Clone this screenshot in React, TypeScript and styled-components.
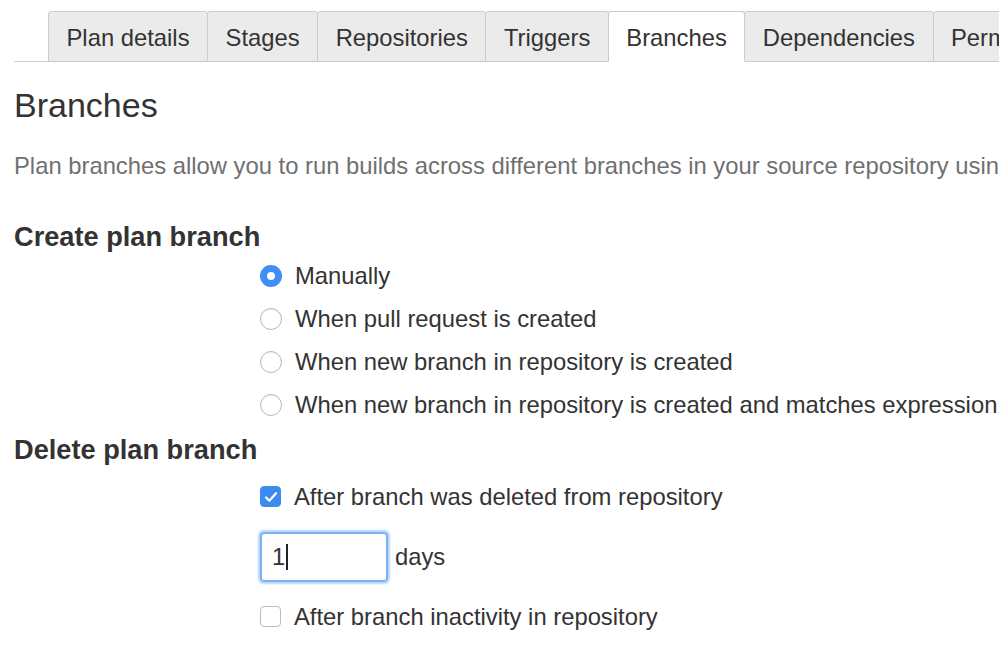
import React from 'react';
import styled, { createGlobalStyle } from 'styled-components';

const tabs = [
    'Plan details',
    'Stages',
    'Repositories',
    'Triggers',
    'Branches',
    'Dependencies',
    'Permissions',
];

const createOptions = [
    'Manually',
    'When pull request is created',
    'When new branch in repository is created',
    'When new branch in repository is created and matches expression',
];

export default function App() {
    return (
        <>
            <GlobalStyle />
            <StyledPage>
                <StyledTabBar>
                    {tabs.map((tab) => (
                        <StyledTab key={tab} active={tab === 'Branches'}>
                            {tab}
                        </StyledTab>
                    ))}
                </StyledTabBar>

                <StyledTitle>Branches</StyledTitle>
                <StyledDescription>
                    Plan branches allow you to run builds across different branches in your
                    source repository using the same plan configuration.
                </StyledDescription>

                <StyledSectionTitle>Create plan branch</StyledSectionTitle>
                <StyledOptions>
                    {createOptions.map((option, i) => (
                        <StyledOptionRow key={option}>
                            <StyledRadio checked={i === 0} />
                            <StyledLabel>{option}</StyledLabel>
                        </StyledOptionRow>
                    ))}
                </StyledOptions>

                <StyledSectionTitle compact>Delete plan branch</StyledSectionTitle>
                <StyledOptions spaced>
                    <StyledOptionRow>
                        <StyledCheckbox checked>
                            <svg width="14" height="12" viewBox="0 0 14 12">
                                <path
                                    d="M2 6.5 L5.4 9.8 L12 2.2"
                                    fill="none"
                                    stroke="#ffffff"
                                    strokeWidth="2.2"
                                    strokeLinecap="round"
                                    strokeLinejoin="round"
                                />
                            </svg>
                        </StyledCheckbox>
                        <StyledLabel>After branch was deleted from repository</StyledLabel>
                    </StyledOptionRow>
                    <StyledInputRow>
                        <StyledInput>
                            1<StyledCaret />
                        </StyledInput>
                        <StyledLabel>days</StyledLabel>
                    </StyledInputRow>
                    <StyledOptionRow>
                        <StyledCheckbox />
                        <StyledLabel>After branch inactivity in repository</StyledLabel>
                    </StyledOptionRow>
                </StyledOptions>
            </StyledPage>
        </>
    );
}

const GlobalStyle = createGlobalStyle`
    html, body {
        margin: 0;
        padding: 0;
        background: #ffffff;
        overflow: hidden;
    }
    body {
        font-family: "Liberation Sans", Arial, sans-serif;
        color: #333333;
    }
`;

const StyledPage = styled.div`
    width: 999px;
    height: 650px;
    overflow: hidden;
    padding-left: 14px;
    box-sizing: border-box;
`;

const StyledTabBar = styled.div`
    display: flex;
    margin-top: 11px;
    padding-left: 34px;
    border-bottom: 1px solid #cccccc;
    white-space: nowrap;
`;

const StyledTab = styled.div<{ active?: boolean }>`
    display: flex;
    align-items: center;
    flex-shrink: 0;
    height: 51px;
    padding: 2px 17.5px 0;
    box-sizing: border-box;
    margin-right: -1px;
    margin-bottom: -1px;
    font-size: 23.8px;
    color: #333333;
    background: ${(p) => (p.active ? '#ffffff' : '#ebebeb')};
    border: 1px solid #cccccc;
    border-bottom-color: ${(p) => (p.active ? '#ffffff' : '#cccccc')};
    border-radius: 3px 3px 0 0;
    position: relative;
    z-index: ${(p) => (p.active ? 1 : 0)};
`;

const StyledTitle = styled.h1`
    margin: 23px 0 0;
    font-size: 34px;
    font-weight: normal;
    line-height: 40px;
    color: #333333;
`;

const StyledDescription = styled.p`
    margin: 24px 0 0;
    font-size: 23.8px;
    line-height: 34px;
    color: #707070;
    white-space: nowrap;
`;

const StyledSectionTitle = styled.h2<{ compact?: boolean }>`
    margin: ${(p) => (p.compact ? '7px' : '37px')} 0 0;
    font-size: 27.2px;
    font-weight: bold;
    line-height: 34px;
    color: #333333;
`;

const StyledOptions = styled.div<{ spaced?: boolean }>`
    display: flex;
    flex-direction: column;
    padding-left: 246px;
    padding-top: ${(p) => (p.spaced ? '8px' : '0')};
`;

const StyledOptionRow = styled.div`
    display: flex;
    align-items: center;
    gap: 13px;
    height: 43px;
    white-space: nowrap;
`;

const StyledInputRow = styled.div`
    display: flex;
    align-items: center;
    gap: 7px;
    margin: 14px 0 13px;
`;

const StyledLabel = styled.span`
    font-size: 23.8px;
    color: #333333;
`;

const StyledRadio = styled.span<{ checked?: boolean }>`
    flex-shrink: 0;
    width: 22px;
    height: 22px;
    box-sizing: border-box;
    border-radius: 50%;
    background: #ffffff;
    border: ${(p) => (p.checked ? '7.5px solid #3e8ef3' : '1px solid #b8b8b8')};
    box-shadow: ${(p) => (p.checked ? 'none' : 'inset 0 1px 1px rgba(0,0,0,0.06)')};
`;

const StyledCheckbox = styled.span<{ checked?: boolean }>`
    flex-shrink: 0;
    display: flex;
    align-items: center;
    justify-content: center;
    width: 21px;
    height: 21px;
    box-sizing: border-box;
    border-radius: 4px;
    background: ${(p) => (p.checked ? '#3b8cf0' : '#ffffff')};
    border: 1px solid ${(p) => (p.checked ? '#3b8cf0' : '#bdbdbd')};
`;

const StyledInput = styled.div`
    display: flex;
    align-items: center;
    width: 128px;
    height: 50px;
    box-sizing: border-box;
    padding-left: 10px;
    border: 2px solid #79b3f6;
    border-radius: 4px;
    box-shadow: 0 0 2px 2px rgba(120, 175, 245, 0.55);
    font-size: 23.8px;
    color: #333333;
`;

const StyledCaret = styled.span`
    display: inline-block;
    width: 1.5px;
    height: 26px;
    margin-left: 1px;
    background: #222222;
`;
